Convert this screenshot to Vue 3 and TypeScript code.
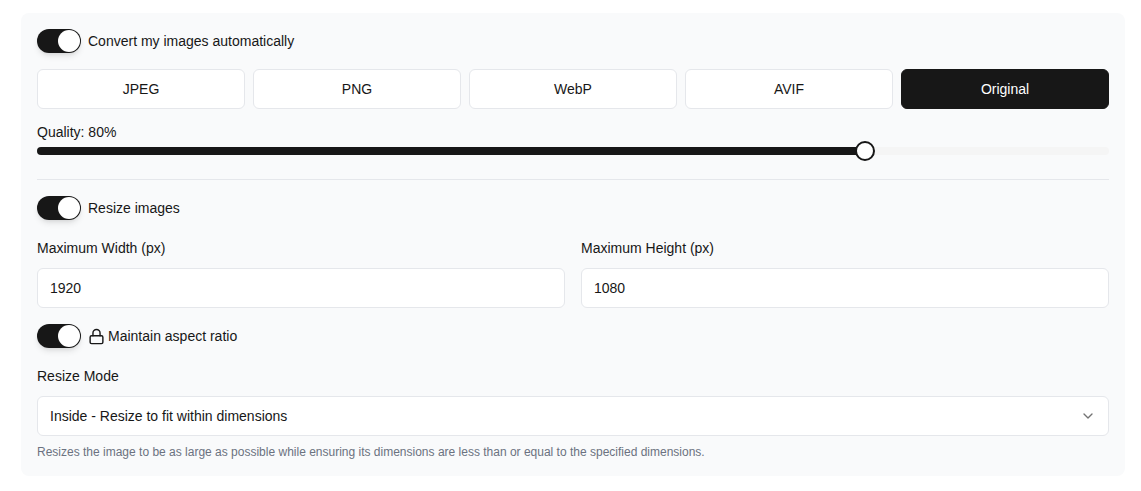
<script setup lang="ts">
const formats: string[] = ['JPEG', 'PNG', 'WebP', 'AVIF', 'Original']
const active = 'Original'
const quality = 80
</script>

<template>
  <main class="page">
    <section class="panel">
      <label class="row">
        <span class="toggle"><span class="knob"></span></span>
        <span>Convert my images automatically</span>
      </label>

      <div class="formats">
        <button v-for="f in formats" :key="f" class="format" :class="{ on: f === active }">{{ f }}</button>
      </div>

      <div class="quality">
        <div class="quality-label">Quality: {{ quality }}%</div>
        <div class="track">
          <div class="fill" :style="{ width: quality - 2.8 + '%' }"><span class="thumb"></span></div>
        </div>
      </div>

      <hr class="divider" />

      <label class="row">
        <span class="toggle"><span class="knob"></span></span>
        <span>Resize images</span>
      </label>

      <div class="dims">
        <div>
          <div class="field-label">Maximum Width (px)</div>
          <div class="box">1920</div>
        </div>
        <div>
          <div class="field-label">Maximum Height (px)</div>
          <div class="box">1080</div>
        </div>
      </div>

      <label class="row aspect">
        <span class="toggle"><span class="knob"></span></span>
        <svg class="lock" width="17" height="17" viewBox="0 0 24 24" fill="none" stroke="#171717" stroke-width="2" stroke-linecap="round" stroke-linejoin="round">
          <rect x="3" y="11" width="18" height="11" rx="2" />
          <path d="M7 11V7a5 5 0 0 1 10 0v4" />
        </svg>
        <span>Maintain aspect ratio</span>
      </label>

      <div class="field-label mode">Resize Mode</div>
      <div class="box select">
        <span>Inside - Resize to fit within dimensions</span>
        <svg width="16" height="16" viewBox="0 0 24 24" fill="none" stroke="#737373" stroke-width="2" stroke-linecap="round" stroke-linejoin="round">
          <path d="m6 9 6 6 6-6" />
        </svg>
      </div>
      <p class="help">Resizes the image to be as large as possible while ensuring its dimensions are less than or equal to the specified dimensions.</p>
    </section>
  </main>
</template>

<style>
html, body { margin: 0; background: #fff; }
</style>

<style scoped>
.page {
  width: 1141px;
  height: 491px;
  box-sizing: border-box;
  padding: 13px 16px 15px 21px;
  font-family: "Liberation Sans", Arial, sans-serif;
  font-size: 14px;
  line-height: 20px;
  color: #171717;
}
.panel {
  box-sizing: border-box;
  height: 463px;
  padding: 16px;
  background: #f9fafb;
  border-radius: 8px;
}
.row {
  display: flex;
  align-items: center;
  gap: 8px;
  height: 24px;
}
.toggle {
  display: flex;
  align-items: center;
  justify-content: flex-end;
  box-sizing: border-box;
  width: 44px;
  height: 24px;
  padding-right: 1px;
  margin-right: -1px;
  border-radius: 12px;
  background: #171717;
  box-shadow: 0 4px 6px -1px rgba(0, 0, 0, 0.1), 0 2px 4px -2px rgba(0, 0, 0, 0.1);
}
.knob {
  box-sizing: border-box;
  width: 22px;
  height: 22px;
  border-radius: 50%;
  background: #fff;
}
.formats {
  display: grid;
  grid-template-columns: repeat(5, 1fr);
  gap: 8px;
  margin-top: 16px;
}
.format {
  height: 40px;
  padding: 0;
  font: inherit;
  color: #171717;
  background: #fff;
  border: 1px solid #e5e7eb;
  border-radius: 6px;
}
.format.on {
  color: #fff;
  background: #171717;
  border-color: #171717;
}
.quality { margin-top: 13px; }
.quality-label { height: 20px; }
.track {
  height: 8px;
  margin-top: 5px;
  border-radius: 4px;
  background: #f5f5f5;
}
.fill {
  position: relative;
  height: 8px;
  border-radius: 4px;
  background: #171717;
}
.thumb {
  position: absolute;
  right: -10px;
  top: -6px;
  box-sizing: border-box;
  width: 20px;
  height: 20px;
  border: 2px solid #171717;
  border-radius: 50%;
  background: #fff;
}
.divider {
  height: 1px;
  margin: 24px 0 16px;
  border: 0;
  background: #e5e7eb;
}
.dims {
  display: grid;
  grid-template-columns: 1fr 1fr;
  gap: 16px;
  margin-top: 18px;
}
.field-label {
  height: 20px;
  margin-bottom: 10px;
}
.box {
  box-sizing: border-box;
  height: 40px;
  display: flex;
  align-items: center;
  justify-content: space-between;
  padding: 0 12px;
  background: #fff;
  border: 1px solid #e5e7eb;
  border-radius: 6px;
}
.aspect { margin-top: 16px; }
.aspect .lock { margin-right: -5px; }
.mode { margin-top: 18px; margin-bottom: 10px; }
.help {
  margin: 8px 0 0;
  font-size: 12px;
  line-height: 16px;
  color: #6b7280;
}
</style>
